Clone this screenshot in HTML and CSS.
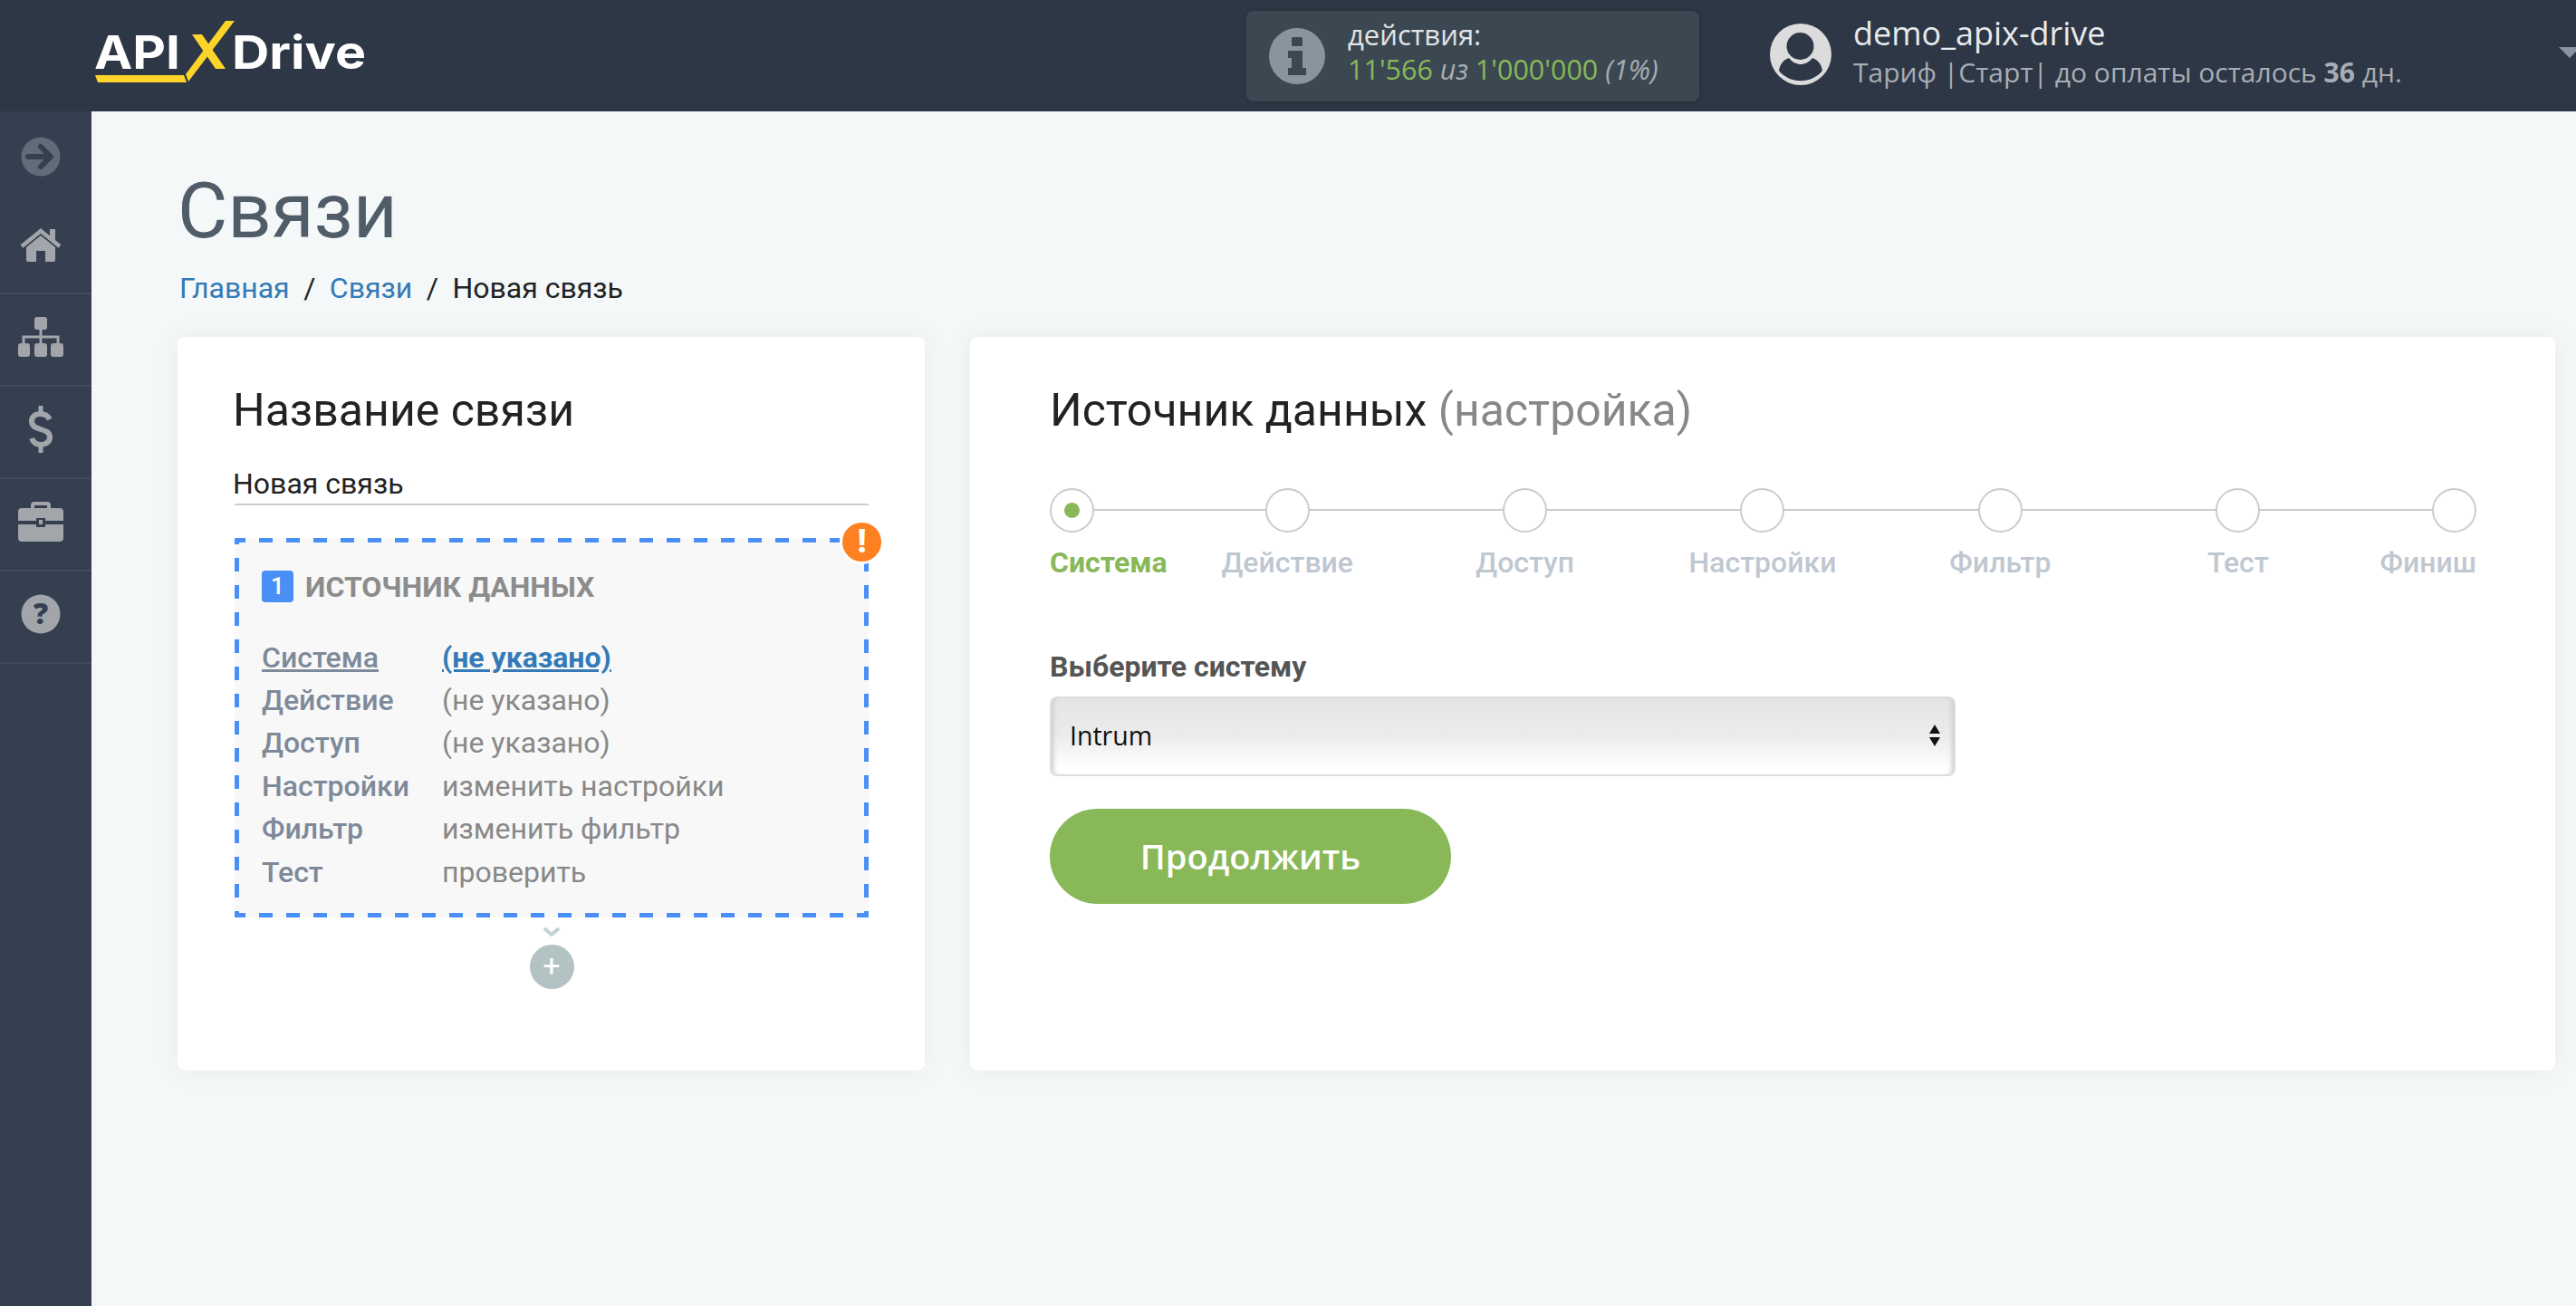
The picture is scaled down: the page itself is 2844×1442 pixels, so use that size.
FILE: index.html
```html
<!DOCTYPE html>
<html lang="ru">
<head>
<meta charset="UTF-8">
<title>Связи</title>
<link rel="stylesheet" href="styles.css">
</head>
<body>
<header class="top">
    <svg class="logo" width="300" height="100" viewBox="105 8 300 100">
        <text class="logo-text" x="104" y="76" textLength="95" lengthAdjust="spacingAndGlyphs">API</text>
        <text class="logo-text" x="256" y="76" textLength="148" lengthAdjust="spacingAndGlyphs">Drive</text>
        <polygon fill="#ffd42a" points="249,23 259,23 208,90 205,82"/>
        <polygon fill="#ffd42a" points="212,38 223,38 249,76 238,76"/>
        <polygon fill="#ffd42a" points="105,83 203,83 206,91 108,91"/>
    </svg>
    <div class="actions">
        <svg class="actions-icon" width="62" height="62" viewBox="0 0 62 62">
            <circle cx="31" cy="31" r="31" fill="#8a949e"/>
            <rect x="25" y="10" width="12" height="10" rx="1.5" fill="#3b4852"/>
            <path d="M21 25H37V44H41V52H21V44H25V33H21Z" fill="#3b4852"/>
        </svg>
        <div class="actions-text">
            <div class="actions-title">действия:</div>
            <div class="actions-count"><b>11'566</b> <i>из</i> <b>1'000'000</b> <i>(1%)</i></div>
        </div>
    </div>
    <div class="user">
        <svg class="user-icon" width="68" height="68" viewBox="0 0 68 68">
            <circle cx="34" cy="34" r="34" fill="#dcdcdc"/>
            <circle cx="33.5" cy="25" r="15" fill="#2d3745"/>
            <path d="M10 52C11 45 15 40 21 38C25 43 30 45 34 45C38 45 43 43 47 38C53 40 57 45 58 52C46 67 22 67 10 52Z" fill="#2d3745"/>
        </svg>
        <div class="user-info">
            <div class="user-name">demo_apix-drive</div>
            <div class="user-plan">Тариф |Старт| до оплаты осталось <b>36</b> дн.</div>
        </div>
    </div>
    <svg class="caret" width="24" height="12" viewBox="0 0 24 12"><path d="M0 0H24L12 12Z" fill="#8a949e"/></svg>
</header>

<div class="page">
    <nav class="side">
        <div class="side-item side-toggle">
            <svg width="44" height="44" viewBox="0 0 44 44">
                <circle cx="22" cy="22" r="21.5" fill="#626c78"/>
                <path d="M8 22H31M22 11L33 22L22 33" fill="none" stroke="#353f4f" stroke-width="6" stroke-linecap="round" stroke-linejoin="round"/>
            </svg>
        </div>
        <div class="side-item">
            <svg width="46" height="37" viewBox="0 0 46 37">
                <path d="M2 20L23 3L44 20" fill="none" stroke="#a2a6ab" stroke-width="4.5"/>
                <rect x="33" y="1" width="6" height="12" fill="#a2a6ab"/>
                <path d="M7 21L23 8L39 21V35Q39 37 37 37H28V25H18V37H9Q7 37 7 35Z" fill="#a2a6ab"/>
            </svg>
        </div>
        <div class="side-item">
            <svg width="50" height="44" viewBox="0 0 50 44">
                <path d="M25 10V22M6 30V22H44V30M25 22V30" fill="none" stroke="#a2a6ab" stroke-width="3"/>
                <rect x="18" y="0" width="14" height="14" rx="3" fill="#a2a6ab"/>
                <rect x="0" y="29" width="13" height="15" rx="3" fill="#a2a6ab"/>
                <rect x="18" y="29" width="14" height="15" rx="3" fill="#a2a6ab"/>
                <rect x="36" y="29" width="14" height="15" rx="3" fill="#a2a6ab"/>
            </svg>
        </div>
        <div class="side-item">
            <svg width="26" height="52" viewBox="0 0 26 52">
                <path d="M23 15C20 10 16 9 13 9C7 9 3 12 3 17C3 29 23 23 23 35C23 40 18 43 13 43C9 43 5 41 3 36" fill="none" stroke="#a2a6ab" stroke-width="6"/>
                <path d="M13 0V9M13 43V52" fill="none" stroke="#a2a6ab" stroke-width="5" stroke-linecap="round"/>
            </svg>
        </div>
        <div class="side-item">
            <svg width="50" height="44" viewBox="0 0 50 44">
                <path d="M16 8V4Q16 2 18 2H32Q34 2 34 4V8" fill="none" stroke="#a2a6ab" stroke-width="4"/>
                <path d="M0 11Q0 7 4 7H46Q50 7 50 11V21H30V18H20V21H0Z" fill="#a2a6ab"/>
                <path d="M0 25H20V28H30V25H50V40Q50 44 46 44H4Q0 44 0 40Z" fill="#a2a6ab"/>
                <rect x="23" y="20" width="4" height="5" fill="#a2a6ab"/>
            </svg>
        </div>
        <div class="side-item">
            <svg width="44" height="44" viewBox="0 0 44 44">
                <circle cx="22" cy="22" r="21.5" fill="#a2a6ab"/>
                <text class="side-help" x="22" y="33" text-anchor="middle">?</text>
            </svg>
        </div>
    </nav>

    <main class="content">
        <h1 class="page-title">Связи</h1>
        <div class="crumbs">
            <a href="#">Главная</a><span class="crumb-sep">/</span><a href="#">Связи</a><span class="crumb-sep">/</span><span>Новая связь</span>
        </div>
        <div class="cards">
            <section class="card card-left">
                <h2 class="card-title">Название связи</h2>
                <div class="name-input">Новая связь</div>
                <div class="flow-box">
                    <span class="warn">!</span>
                    <div class="flow-head"><span class="flow-num">1</span>ИСТОЧНИК ДАННЫХ</div>
                    <div class="flow-rows">
                        <a href="#" class="flow-label">Система</a><a href="#" class="flow-value flow-empty">(не указано)</a>
                        <span class="flow-label">Действие</span><span class="flow-value">(не указано)</span>
                        <span class="flow-label">Доступ</span><span class="flow-value">(не указано)</span>
                        <span class="flow-label">Настройки</span><span class="flow-value">изменить настройки</span>
                        <span class="flow-label">Фильтр</span><span class="flow-value">изменить фильтр</span>
                        <span class="flow-label">Тест</span><span class="flow-value">проверить</span>
                    </div>
                </div>
                <div class="flow-add">
                    <svg width="20" height="10" viewBox="0 0 20 10"><path d="M2 1L10 8L18 1" fill="none" stroke="#c5d2d2" stroke-width="4"/></svg>
                    <span class="add-btn">+</span>
                </div>
            </section>

            <section class="card card-right">
                <h2 class="card-title">Источник данных <span class="muted">(настройка)</span></h2>
                <div class="steps">
                    <div class="step step-first step-on"><span class="dot"></span><span class="step-name">Система</span></div>
                    <div class="step"><span class="dot"></span><span class="step-name">Действие</span></div>
                    <div class="step"><span class="dot"></span><span class="step-name">Доступ</span></div>
                    <div class="step"><span class="dot"></span><span class="step-name">Настройки</span></div>
                    <div class="step"><span class="dot"></span><span class="step-name">Фильтр</span></div>
                    <div class="step"><span class="dot"></span><span class="step-name">Тест</span></div>
                    <div class="step step-last"><span class="dot"></span><span class="step-name">Финиш</span></div>
                </div>
                <div class="field-label">Выберите систему</div>
                <div class="select">
                    <span>Intrum</span>
                    <svg width="14" height="26" viewBox="0 0 14 26"><path d="M7 1L13 11H1ZM7 25L1 15H13Z" fill="#111"/></svg>
                </div>
                <button class="go">Продолжить</button>
            </section>
        </div>
    </main>
</div>
</body>
</html>
```

FILE: styles.css
```css
*{
    margin:0;
    padding:0;
    box-sizing:border-box;
}
html,body{
    width:2844px;
    height:1442px;
    overflow:hidden;
}
body{
    background:#f4f8f9;
    font-family:Roboto,"Liberation Sans",sans-serif;
    color:#222;
}
a{
    color:#337ab7;
    text-decoration:none;
}

/* top bar */
.top{
    display:flex;
    align-items:center;
    height:123px;
    padding-left:105px;
    background:#2d3745;
    font-family:"Open Sans",sans-serif;
}
.logo{
    flex:none;
    margin-top:-7px;
}
.logo-text{
    font-family:Inter,sans-serif;
    font-weight:700;
    font-size:51px;
    fill:#fff;
}
.actions{
    display:flex;
    align-items:center;
    flex:none;
    width:500px;
    height:100px;
    margin-left:971px;
    padding-left:25px;
    background:#3b4852;
    border-radius:8px;
    box-shadow:0 0 6px rgba(0,0,0,.15);
}
.actions-icon{
    flex:none;
    margin-right:25px;
}
.actions-text{
    padding-bottom:10px;
}
.actions-title{
    font-size:31px;
    line-height:38px;
    color:#e2e4e6;
}
.actions-count{
    font-size:30.5px;
    line-height:38px;
    color:#a8adb2;
    white-space:nowrap;
}
.actions-count b{
    font-weight:400;
    color:#88b858;
}
.user{
    display:flex;
    align-items:center;
    flex:none;
    margin-left:78px;
}
.user-icon{
    flex:none;
    margin-top:-3px;
}
.user-info{
    margin-left:24px;
    padding-bottom:9px;
}
.user-name{
    font-size:36px;
    line-height:46px;
    color:#e8eaec;
}
.user-plan{
    font-size:30px;
    line-height:40px;
    color:#a8adb5;
    white-space:nowrap;
}
.caret{
    flex:none;
    margin:-7px -5px 0 auto;
}

/* sidebar */
.page{
    display:flex;
    height:1319px;
}
.side{
    flex:none;
    width:101px;
    background:#353f4f;
}
.side-item{
    display:flex;
    align-items:center;
    justify-content:center;
    height:102px;
    padding:0 11px 6px 0;
    border-bottom:2px solid #414b5a;
}
.side-toggle{
    height:100px;
    padding-bottom:0;
    border-bottom:0;
}
.side-help{
    font-family:"Open Sans",sans-serif;
    font-weight:800;
    font-size:32px;
    fill:#353f4f;
}

/* content */
.content{
    flex:1;
    padding:74px 23px 0 95px;
}
.page-title{
    font-weight:400;
    font-size:85px;
    line-height:72px;
    color:#505d69;
}
.crumbs{
    margin-top:29px;
    font-size:32px;
    line-height:40px;
    padding-left:2px;
}
.crumb-sep{
    margin:0 15.5px;
    color:#222;
}
.cards{
    display:flex;
    gap:50px;
    margin-top:34px;
}
.card{
    height:810px;
    background:#fff;
    border-radius:8px;
    box-shadow:0 0 30px rgba(0,0,0,.06);
}
.card-left{
    flex:none;
    width:825px;
    padding:56px 62px 0 63px;
}
.card-left .card-title,
.name-input{
    text-indent:-2px;
}
.card-right{
    flex:1;
    padding:56px 87px 0 88px;
}
.card-title{
    font-weight:400;
    font-size:50px;
    line-height:50px;
    color:#222;
}
.muted{
    color:#888;
}

/* left card */
.name-input{
    margin-top:35px;
    height:45px;
    font-size:32px;
    line-height:43px;
    border-bottom:2px solid #ccc;
}
.flow-box{
    position:relative;
    height:419px;
    margin-top:36px;
    padding:36px 30px 0;
    background-color:#f8f8f8;
    background-image:
        linear-gradient(90deg,#4a8ff5 50%,transparent 50%),
        linear-gradient(90deg,#4a8ff5 50%,transparent 50%),
        linear-gradient(#4a8ff5 50%,transparent 50%),
        linear-gradient(#4a8ff5 50%,transparent 50%);
    background-size:30px 5px,30px 5px,5px 30px,5px 30px;
    background-position:27px 0,27px 100%,0 22px,100% 22px;
    background-repeat:repeat-x,repeat-x,repeat-y,repeat-y;
}
.warn{
    position:absolute;
    top:-20px;
    right:-17px;
    width:49px;
    height:49px;
    border:3px solid #fff;
    border-radius:50%;
    background:#ff8020;
    color:#fff;
    font-weight:900;
    font-size:36px;
    line-height:43px;
    text-align:center;
}
.flow-head{
    display:flex;
    align-items:center;
    height:35px;
    font-weight:700;
    font-size:32px;
    color:#8c8c8c;
}
.flow-num{
    width:35px;
    height:35px;
    margin-right:13px;
    background:#4a8ff5;
    border-radius:4px;
    color:#fff;
    font-weight:500;
    font-size:26px;
    line-height:35px;
    text-align:center;
}
.flow-rows{
    display:grid;
    grid-template-columns:199px 1fr;
    grid-auto-rows:47.4px;
    align-items:center;
    margin-top:37px;
    font-size:32px;
}
.flow-label{
    justify-self:start;
    font-weight:500;
    color:#7e8a9a;
}
a.flow-label{
    text-decoration:underline;
}
.flow-value{
    justify-self:start;
    color:#888;
}
.flow-empty{
    font-weight:700;
    color:#337ab7;
    text-decoration:underline;
}
.flow-add{
    display:flex;
    flex-direction:column;
    align-items:center;
    margin-top:11px;
}
.add-btn{
    width:49px;
    height:49px;
    margin-top:9px;
    border-radius:50%;
    background:#b3c3c3;
    color:#fff;
    font-size:34px;
    line-height:46px;
    text-align:center;
}

/* right card */
.steps{
    position:relative;
    display:grid;
    grid-template-columns:131px repeat(5,1fr) 132px;
    margin-top:61px;
}
.steps::before{
    content:"";
    position:absolute;
    top:23px;
    left:0;
    right:0;
    height:2px;
    background:#ccc;
}
.step{
    position:relative;
    display:flex;
    flex-direction:column;
    align-items:center;
}
.step-first{
    align-items:flex-start;
}
.step-last{
    align-items:flex-end;
}
.dot{
    position:relative;
    width:49px;
    height:49px;
    background:#fff;
    border:2px solid #ccc;
    border-radius:50%;
}
.step-on .dot::after{
    content:"";
    position:absolute;
    top:14px;
    left:14px;
    width:17px;
    height:17px;
    border-radius:50%;
    background:#88b858;
}
.step-name{
    margin-top:13px;
    font-weight:500;
    font-size:32px;
    line-height:40px;
    white-space:nowrap;
    color:#bfc7d1;
}
.step-on .step-name{
    font-weight:700;
    color:#88b858;
}
.field-label{
    margin-top:75px;
    font-weight:700;
    font-size:32px;
    line-height:40px;
    color:#555;
}
.select{
    display:flex;
    align-items:center;
    justify-content:space-between;
    width:1000px;
    height:88px;
    margin-top:13px;
    padding:0 14px 2px 20px;
    border:2px solid #ddd;
    border-radius:8px;
    background:linear-gradient(#e4e4e4 0,#ececec 50%,#fff 92%);
    box-shadow:inset 6px 0 5px -4px #ccc,inset -6px 0 5px -4px #ccc;
    font-family:"Open Sans",sans-serif;
    font-size:28.5px;
    color:#111;
}
.go{
    display:block;
    width:443px;
    height:105px;
    margin-top:36px;
    padding-bottom:2px;
    border:0;
    border-radius:53px;
    background:#88b858;
    color:#fff;
    font-family:"Open Sans",sans-serif;
    font-weight:600;
    font-size:38px;
}
```
